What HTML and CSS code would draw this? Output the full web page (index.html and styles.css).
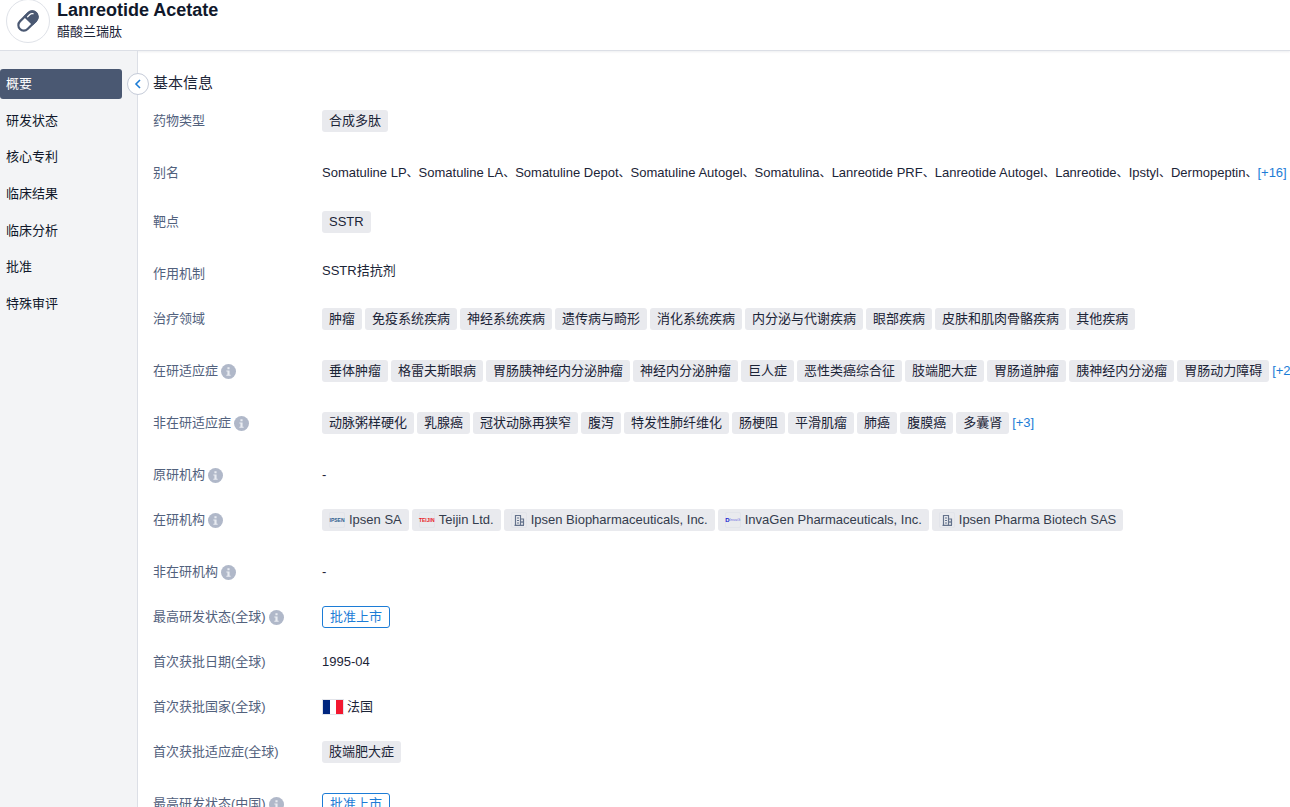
FILE: index.html
```html
<!DOCTYPE html>
<html lang="zh-CN">
<head>
    <meta charset="UTF-8">
    <meta name="viewport" content="width=device-width, initial-scale=1.0">
    <title>Lanreotide Acetate</title>
    <link rel="stylesheet" href="styles.css">
</head>
<body>
    <!-- Shared icons -->
    <svg class="sprite" aria-hidden="true">
        <symbol id="icon-info" viewBox="0 0 14 14">
            <circle cx="7" cy="7" r="7" fill="#b0b8c9"/>
            <path d="M6 3h2v2H6zM5 6h3v4h1v1H5v-1h1V7H5z" fill="#e9ecf2"/>
        </symbol>
        <symbol id="icon-building" viewBox="0 0 14 14">
            <path d="M3.500 12V2.500h5V12M8.500 6h3v6M2.500 12.300h9.500M5 5h2M5 7.500h2M5 10h2M10 8v2" fill="none" stroke="#64728c" stroke-width="1.200"/>
        </symbol>
    </svg>

    <header class="header">
        <div class="drug-icon">
            <svg width="26" height="26" viewBox="0 0 24 24">
                <g transform="rotate(-45 12 12)">
                    <rect x="1.500" y="7" width="21" height="10" rx="5" fill="#fff" stroke="#4a5872" stroke-width="2"/>
                    <path d="M12 6h5.500a6 6 0 0 1 0 12H12z" fill="#4a5872"/>
                    <path d="M14.500 9h3q1.800 0 2.500 1.500" fill="none" stroke="#fff" stroke-width="1.200" stroke-linecap="round"/>
                </g>
            </svg>
        </div>
        <div>
            <h1>Lanreotide Acetate</h1>
            <p>醋酸兰瑞肽</p>
        </div>
    </header>

    <div class="layout">
        <aside class="sidebar">
            <nav>
                <a class="active" href="#overview">概要</a>
                <a href="#status">研发状态</a>
                <a href="#patents">核心专利</a>
                <a href="#results">临床结果</a>
                <a href="#analysis">临床分析</a>
                <a href="#approval">批准</a>
                <a href="#review">特殊审评</a>
            </nav>
            <button class="collapse" aria-label="收起">
                <svg width="8" height="12" viewBox="0 0 8 12"><path d="M6 2L2 6l4 4" fill="none" stroke="#1c7cd6" stroke-width="1.600"/></svg>
            </button>
        </aside>

        <main class="content" id="overview">
            <h2>基本信息</h2>
            <dl>
                <div class="row wide">
                    <dt>药物类型</dt>
                    <dd><span class="tag">合成多肽</span></dd>
                </div>
                <div class="row names">
                    <dt>别名</dt>
                    <dd>Somatuline LP<i>、</i>Somatuline LA<i>、</i>Somatuline Depot<i>、</i>Somatuline Autogel<i>、</i>Somatulina<i>、</i>Lanreotide PRF<i>、</i>Lanreotide Autogel<i>、</i>Lanreotide<i>、</i>Ipstyl<i>、</i>Dermopeptin<i>、</i><a href="#names">[+16]</a></dd>
                </div>
                <div class="row wide">
                    <dt>靶点</dt>
                    <dd><span class="tag">SSTR</span></dd>
                </div>
                <div class="row">
                    <dt>作用机制</dt>
                    <dd class="plain">SSTR拮抗剂</dd>
                </div>
                <div class="row wide">
                    <dt>治疗领域</dt>
                    <dd>
                        <span class="tag">肿瘤</span>
                        <span class="tag">免疫系统疾病</span>
                        <span class="tag">神经系统疾病</span>
                        <span class="tag">遗传病与畸形</span>
                        <span class="tag">消化系统疾病</span>
                        <span class="tag">内分泌与代谢疾病</span>
                        <span class="tag">眼部疾病</span>
                        <span class="tag">皮肤和肌肉骨骼疾病</span>
                        <span class="tag">其他疾病</span>
                    </dd>
                </div>
                <div class="row wide">
                    <dt>在研适应症<svg class="info"><use href="#icon-info"/></svg></dt>
                    <dd>
                        <span class="tag">垂体肿瘤</span>
                        <span class="tag">格雷夫斯眼病</span>
                        <span class="tag">胃肠胰神经内分泌肿瘤</span>
                        <span class="tag">神经内分泌肿瘤</span>
                        <span class="tag">巨人症</span>
                        <span class="tag">恶性类癌综合征</span>
                        <span class="tag">肢端肥大症</span>
                        <span class="tag">胃肠道肿瘤</span>
                        <span class="tag">胰神经内分泌瘤</span>
                        <span class="tag">胃肠动力障碍</span>
                        <a href="#active">[+2]</a>
                    </dd>
                </div>
                <div class="row wide">
                    <dt>非在研适应症<svg class="info"><use href="#icon-info"/></svg></dt>
                    <dd>
                        <span class="tag">动脉粥样硬化</span>
                        <span class="tag">乳腺癌</span>
                        <span class="tag">冠状动脉再狭窄</span>
                        <span class="tag">腹泻</span>
                        <span class="tag">特发性肺纤维化</span>
                        <span class="tag">肠梗阻</span>
                        <span class="tag">平滑肌瘤</span>
                        <span class="tag">肺癌</span>
                        <span class="tag">腹膜癌</span>
                        <span class="tag">多囊肾</span>
                        <a href="#inactive">[+3]</a>
                    </dd>
                </div>
                <div class="row">
                    <dt>原研机构<svg class="info"><use href="#icon-info"/></svg></dt>
                    <dd>-</dd>
                </div>
                <div class="row wide">
                    <dt>在研机构<svg class="info"><use href="#icon-info"/></svg></dt>
                    <dd>
                        <span class="tag org"><span class="logo ipsen">IPSEN</span>Ipsen SA</span>
                        <span class="tag org"><span class="logo teijin">TEIJIN</span>Teijin Ltd.</span>
                        <span class="tag org"><svg class="logo"><use href="#icon-building"/></svg>Ipsen Biopharmaceuticals, Inc.</span>
                        <span class="tag org"><span class="logo invagen"><b>D</b>InvaG</span>InvaGen Pharmaceuticals, Inc.</span>
                        <span class="tag org"><svg class="logo"><use href="#icon-building"/></svg>Ipsen Pharma Biotech SAS</span>
                    </dd>
                </div>
                <div class="row">
                    <dt>非在研机构<svg class="info"><use href="#icon-info"/></svg></dt>
                    <dd>-</dd>
                </div>
                <div class="row">
                    <dt>最高研发状态(全球)<svg class="info"><use href="#icon-info"/></svg></dt>
                    <dd><span class="tag phase">批准上市</span></dd>
                </div>
                <div class="row">
                    <dt>首次获批日期(全球)</dt>
                    <dd>1995-04</dd>
                </div>
                <div class="row">
                    <dt>首次获批国家(全球)</dt>
                    <dd><span class="flag"></span>法国</dd>
                </div>
                <div class="row wide">
                    <dt>首次获批适应症(全球)</dt>
                    <dd><span class="tag">肢端肥大症</span></dd>
                </div>
                <div class="row">
                    <dt>最高研发状态(中国)<svg class="info"><use href="#icon-info"/></svg></dt>
                    <dd><span class="tag phase">批准上市</span></dd>
                </div>
            </dl>
        </main>
    </div>
</body>
</html>
```
FILE: styles.css
```css
* {
    margin: 0;
    padding: 0;
    box-sizing: border-box;
}

body {
    height: 100vh;
    display: flex;
    flex-direction: column;
    overflow: hidden;
    font-family: "Liberation Sans", "Noto Sans CJK SC", sans-serif;
    font-size: 13px;
    line-height: 22px;
    color: #1b2437;
    background: #fff;
}

a {
    color: #1c7cd6;
    text-decoration: none;
}

.sprite {
    display: none;
}

.header {
    flex: none;
    display: flex;
    align-items: flex-end;
    gap: 7px;
    height: 51px;
    padding: 0 6px 7px;
    border-bottom: 1px solid #dcdfe6;
    box-shadow: 0 1px 2px rgba(30, 40, 70, 0.08);
}

.header h1 {
    font-size: 18px;
    line-height: 22px;
    color: #10182b;
}

.drug-icon {
    display: flex;
    align-items: center;
    justify-content: center;
    width: 44px;
    height: 44px;
    border: 1px solid #dfe2e8;
    border-radius: 50%;
}

.layout {
    flex: 1;
    display: flex;
    min-height: 0;
}

.sidebar {
    position: relative;
    flex: none;
    width: 138px;
    padding-top: 18px;
    background: #f3f4f6;
    border-right: 1px solid #dcdfe6;
}

.sidebar nav {
    display: flex;
    flex-direction: column;
    justify-content: space-between;
    min-height: 250px;
    padding-right: 15px;
}

.sidebar nav a {
    padding: 0 6px;
    line-height: 30px;
    color: #10182b;
    border-radius: 3px;
}

.sidebar nav .active {
    color: #fff;
    background: #4a5872;
}

/* Sits on the sidebar's border */
.collapse {
    position: absolute;
    top: 22px;
    right: -12px;
    display: flex;
    align-items: center;
    justify-content: center;
    width: 22px;
    height: 22px;
    background: #fff;
    border: 1px solid #c5cbd8;
    border-radius: 50%;
    cursor: pointer;
}

.content {
    flex: 1;
    min-width: 0;
    padding: 21px 0 0 15px;
    overflow: hidden;
}

.content h2 {
    margin-bottom: 16px;
    font-size: 15px;
    font-weight: normal;
    line-height: 22px;
}

.row {
    display: flex;
    align-items: flex-start;
    margin-bottom: 23px;
    white-space: nowrap;
}

.row.wide {
    margin-bottom: 30px;
}

.row.names {
    margin-bottom: 27px;
}

.row dt {
    flex: none;
    display: flex;
    align-items: center;
    gap: 3px;
    width: 169px;
    color: #52617d;
}

.row dd {
    display: flex;
    align-items: center;
    gap: 3px;
    min-height: 22px;
}

.row dd.plain {
    min-height: 0;
    line-height: 16px;
}

.row.names dd {
    display: block;
}

.names i {
    font-size: 12px;
    font-style: normal;
}

.info {
    width: 15px;
    height: 15px;
}

.tag {
    flex: none;
    height: 22px;
    padding: 0 7px;
    background: #e9eaee;
    border-radius: 3px;
}

.org {
    display: flex;
    align-items: center;
    gap: 4px;
    color: #343c4d;
}

.phase {
    line-height: 20px;
    color: #1c7cd6;
    background: #fff;
    border: 1px solid #1c7cd6;
}

.logo {
    display: flex;
    align-items: center;
    justify-content: center;
    width: 16px;
    height: 16px;
    font-size: 5px;
    line-height: 1;
    border: 1px solid #e2e4ea;
    border-radius: 2px;
}

.ipsen {
    color: #2e6090;
    font-weight: bold;
}

.teijin {
    color: #e8202a;
    font-weight: bold;
}

.invagen {
    color: #6a6ae0;
    font-size: 4px;
}

.invagen b {
    color: #1522d0;
    font-size: 6px;
}

.flag {
    width: 22px;
    height: 16px;
    border: 1px solid #e2e4ea;
    background: linear-gradient(to right, #00267f 33%, #fff 33%, #fff 67%, #f31830 67%);
}
```
